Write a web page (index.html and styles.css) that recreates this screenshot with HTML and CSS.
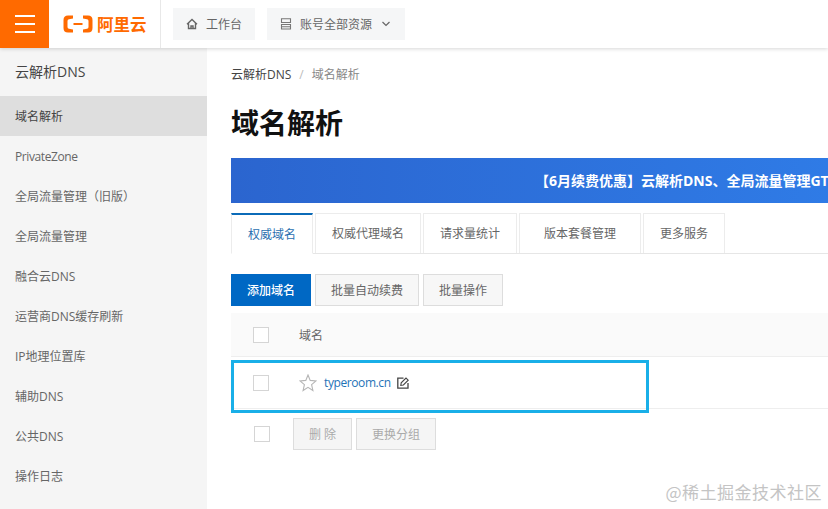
FILE: index.html
```html
<!DOCTYPE html>
<html lang="zh-CN">
<head>
<meta charset="utf-8">
<title>域名解析</title>
<link rel="stylesheet" href="styles.css">
</head>
<body>
<header class="topbar">
  <div class="menu-btn"><span></span><span></span><span></span></div>
  <div class="logo">
    <svg class="logo-mark" width="30" height="18" viewBox="0 0 30 18"><path d="M10 .5H5Q.5 .5 .5 5V13Q.5 17.500 5 17.500H10V14.500L6 13.800Q4.500 13.500 4.500 12V6Q4.500 4.500 6 4.200L10 3.500Z" fill="#ff6a00"/><path d="M20 .5H25Q29.500 .5 29.500 5V13Q29.500 17.500 25 17.500H20V14.500L24 13.800Q25.500 13.500 25.500 12V6Q25.500 4.500 24 4.200L20 3.500Z" fill="#ff6a00"/><rect x="10.500" y="8" width="9" height="2" fill="#ff6a00"/></svg>
    <span class="logo-text">阿里云</span>
  </div>
  <div class="top-btn workbench">
    <svg width="12" height="12" viewBox="0 0 12 12"><path d="M1 6.200 6 1.500 11 6.200M2.500 5V10.500H9.500V5M5 10.500V8H7V10.500" fill="none" stroke="#666" stroke-width="1.400"/></svg>
    <span>工作台</span>
  </div>
  <div class="top-btn resources">
    <svg width="12" height="12" viewBox="0 0 12 12"><path d="M1.500 .8H10.500V4.500H1.500ZM1.500 6.500H10.500V11H1.500ZM1.500 8.700H10.500" fill="none" stroke="#777" stroke-width="1.100"/></svg>
    <span>账号全部资源</span>
    <svg class="chev" width="10" height="10" viewBox="0 0 10 10"><path d="M1.500 3 5 6.500 8.500 3" fill="none" stroke="#666" stroke-width="1.200"/></svg>
  </div>
</header>
<div class="body">
  <aside class="sidebar">
    <div class="side-title">云解析DNS</div>
    <nav class="side-nav">
      <a class="side-item active">域名解析</a>
      <a class="side-item latin">PrivateZone</a>
      <a class="side-item">全局流量管理（旧版）</a>
      <a class="side-item">全局流量管理</a>
      <a class="side-item">融合云DNS</a>
      <a class="side-item">运营商DNS缓存刷新</a>
      <a class="side-item">IP地理位置库</a>
      <a class="side-item">辅助DNS</a>
      <a class="side-item">公共DNS</a>
      <a class="side-item">操作日志</a>
    </nav>
  </aside>
  <main class="main">
    <div class="crumbs"><span class="crumb-link">云解析DNS</span><span class="crumb-sep">/</span><span class="crumb-cur">域名解析</span></div>
    <h1 class="title">域名解析</h1>
    <div class="banner"><span class="banner-text">【6月续费优惠】云解析DNS、全局流量管理GT</span></div>
    <div class="tabs">
      <div class="tab current">权威域名</div>
      <div class="tab">权威代理域名</div>
      <div class="tab">请求量统计</div>
      <div class="tab wide">版本套餐管理</div>
      <div class="tab">更多服务</div>
    </div>
    <div class="actions">
      <button class="btn primary">添加域名</button>
      <button class="btn">批量自动续费</button>
      <button class="btn">批量操作</button>
    </div>
    <div class="table">
      <div class="row head">
        <span class="cell-check"><i class="check"></i></span>
        <span class="cell-name">域名</span>
      </div>
      <div class="row item">
        <span class="cell-check"><i class="check"></i></span>
        <span class="cell-name">
          <svg class="star" width="18" height="18" viewBox="0 0 18 18"><path d="M9 1 11.200 6.400 17 6.900 12.600 10.700 13.900 16.500 9 13.400 4.100 16.500 5.400 10.700 1 6.900 6.800 6.400Z" fill="none" stroke="#b5b5b5" stroke-width="1.100"/></svg>
          <a class="domain latin">typeroom.cn</a>
          <svg class="edit" width="12" height="12" viewBox="0 0 12 12"><path d="M6.500 1.200H.8V11.200H11V6" fill="none" stroke="#444" stroke-width="1.300"/><path d="M3.800 8.300 4.200 5.800 9 1 11.200 3.200 6.400 8Z" fill="none" stroke="#444" stroke-width="1.100"/></svg>
        </span>
      </div>
      <div class="row foot">
        <span class="cell-check"><i class="check"></i></span>
        <span class="foot-btns">
          <button class="btn disabled del">删 除</button>
          <button class="btn disabled">更换分组</button>
        </span>
      </div>
      <div class="highlight"></div>
    </div>
  </main>
</div>
<div class="watermark">@稀土掘金技术社区</div>
</body>
</html>
```

FILE: styles.css
```css
* { box-sizing: border-box; }
html, body { margin: 0; height: 100%; overflow: hidden; }
body {
  position: relative;
  background: #fff;
  color: #333;
  font-family: "Open Sans", "Noto Sans CJK SC", sans-serif;
  font-size: 12px;
}
.topbar {
  position: relative;
  z-index: 2;
  display: flex;
  align-items: center;
  height: 48px;
  background: #fff;
  box-shadow: 0 1px 4px rgba(0, 0, 0, .16);
}
.menu-btn {
  width: 49px;
  height: 48px;
  background: #ff6a00;
  display: flex;
  flex-direction: column;
  justify-content: center;
  align-items: center;
  gap: 6px;
}
.menu-btn span { display: block; width: 20px; height: 2px; background: #fff; }
.logo {
  width: 112px;
  height: 48px;
  display: flex;
  align-items: center;
  gap: 4px;
  padding-left: 14px;
  border-right: 1px solid #e8e8e8;
}
.logo-mark { flex: none; }
.logo-text { color: #ff6a00; font-size: 16.500px; font-weight: 700; white-space: nowrap; }
.top-btn {
  height: 32px;
  display: flex;
  align-items: center;
  background: #f5f6f7;
  color: #666;
  gap: 8px;
}
.workbench { width: 82px; margin-left: 12px; padding-left: 13px; }
.resources { width: 138px; margin-left: 12px; padding-left: 13px; }
.chev { margin-left: 1px; }
.body { display: flex; height: 461px; }
.sidebar { width: 207px; flex: none; background: #f5f5f5; }
.side-title { height: 48px; padding-left: 15px; line-height: 47px; font-size: 14px; color: #444; }
.side-nav { display: flex; flex-direction: column; }
.side-item { display: block; height: 40px; line-height: 42px; padding-left: 15px; color: #666; white-space: nowrap; }
.side-item.active { background: #dedede; color: #444; }
.latin { letter-spacing: -.4px; }
.main { flex: 1; min-width: 0; padding: 0 0 0 24px; overflow: hidden; }
.crumbs { display: flex; align-items: center; height: 18px; margin-top: 17px; white-space: nowrap; }
.crumb-link { color: #444; }
.crumb-sep { margin: 0 8px; color: #bbb; }
.crumb-cur { color: #888; }
.title {
  margin: 15px 0 0;
  height: 50px;
  line-height: 50px;
  font-size: 28px;
  font-weight: 700;
  color: #111;
}
.banner {
  height: 45px;
  margin-top: 10px;
  line-height: 45px;
  padding-left: 304px;
  white-space: nowrap;
  overflow: hidden;
  background: linear-gradient(90deg, #2b65cf, #2f7be6);
  color: #fff;
  font-size: 14px;
  font-weight: 700;
}
.tabs { display: flex; gap: 2px; height: 41px; margin-top: 10px; border-bottom: 1px solid #e6e6e6; }
.tab {
  height: 40px;
  line-height: 40px;
  padding: 0 16px;
  border: 1px solid #ececec;
  border-bottom: 0;
  color: #666;
  white-space: nowrap;
}
.tab.current {
  width: 82px;
  height: 41px;
  padding: 0 16px;
  border-top: 2px solid #0b6bb8;
  border-bottom: 1px solid #fff;
  line-height: 39px;
  color: #2a6fb0;
  background: #fff;
}
.tab.wide { padding: 0 24px; }
.actions { display: flex; gap: 4px; margin-top: 20px; }
.btn {
  height: 32px;
  padding: 0 15px;
  border: 1px solid #ddd;
  background: #f7f7f7;
  color: #666;
  font: inherit;
  white-space: nowrap;
}
.btn.primary { width: 80px; background: #0068c4; border-color: #0068c4; color: #fff; font-weight: 500; }
.table { position: relative; margin-top: 7px; }
.row { display: flex; align-items: center; white-space: nowrap; }
.head { height: 44px; background: #fafafa; border-bottom: 1px solid #eee; }
.item { height: 52px; border-bottom: 1px solid #eee; }
.foot { height: 50px; }
.cell-check { width: 68px; padding-left: 22px; display: flex; }
.check { display: block; width: 16px; height: 16px; border: 1px solid #d5d5d5; background: #fff; }
.foot .check { margin-left: 1px; }
.cell-name { display: flex; align-items: center; color: #666; }
.star { margin-right: 7px; }
.domain { color: #1f73b7; }
.edit { margin-left: 6px; }
.foot-btns { display: flex; gap: 4px; margin-left: -6px; }
.btn.disabled { color: #aaa; background: #f5f5f5; }
.btn.del { width: 59px; padding: 0; }
.highlight {
  position: absolute;
  left: 0;
  top: 47px;
  width: 418px;
  height: 53px;
  border: 3px solid #19afe8;
  pointer-events: none;
}
.watermark {
  position: absolute;
  right: 6px;
  bottom: 5px;
  color: #c4c4c4;
  font-family: "Noto Sans CJK SC", sans-serif;
  font-size: 17px;
  letter-spacing: .5px;
  line-height: 24px;
  white-space: nowrap;
}
```
